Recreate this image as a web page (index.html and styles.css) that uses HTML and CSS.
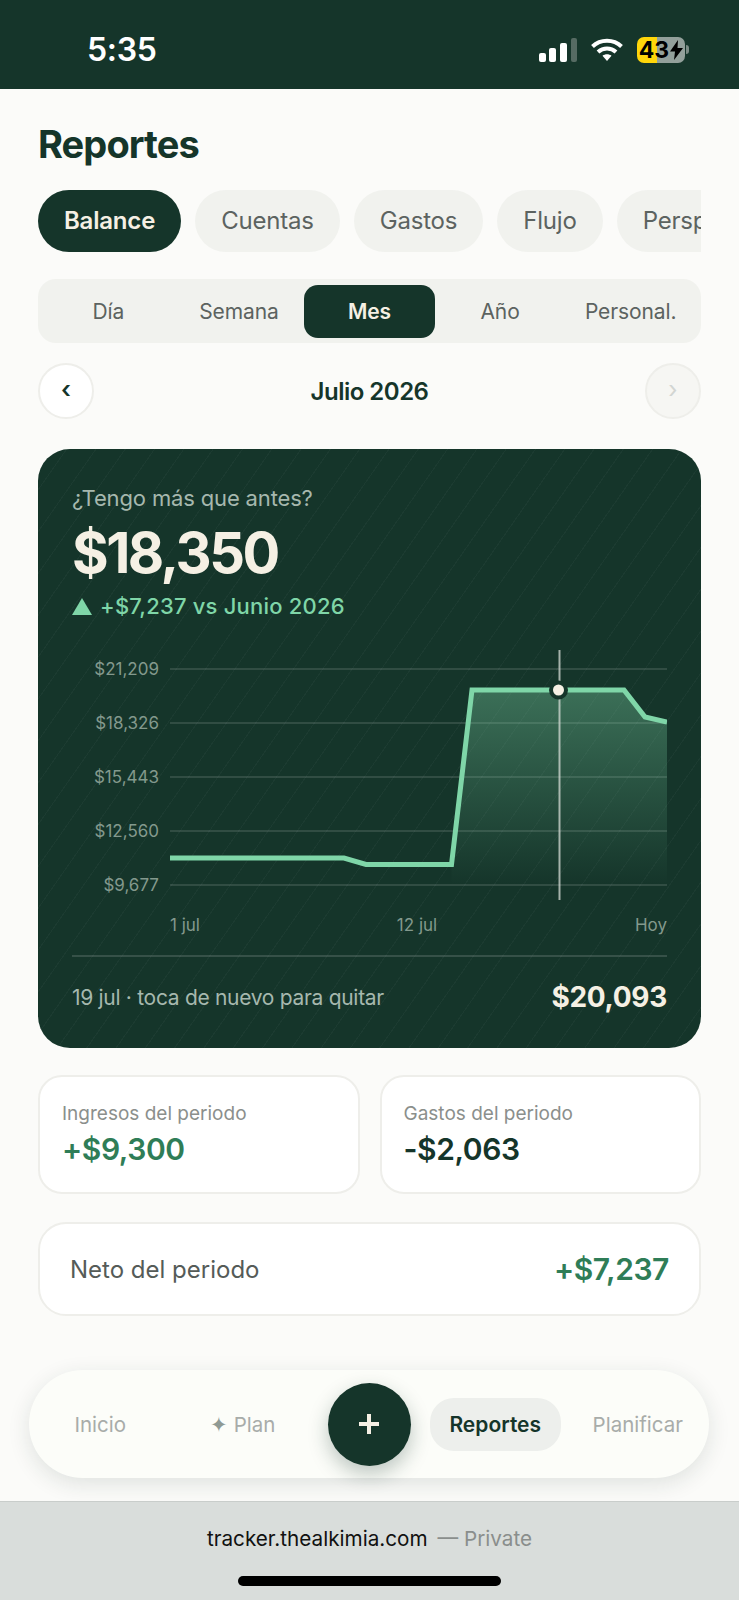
FILE: index.html
```html
<!DOCTYPE html>
<html lang="es">
<head>
    <meta charset="UTF-8">
    <meta name="viewport" content="width=device-width, initial-scale=1.0">
    <title>Reportes</title>
    <link rel="stylesheet" href="styles.css">
</head>
<body>
    <!-- Barra de estado -->
    <div class="status-bar">
        <span class="clock">5:35</span>
        <div class="status-icons">
            <svg class="signal" width="38" height="24" viewBox="0 0 38 24">
                <rect x="0" y="15" width="7" height="9" rx="2" fill="#fff"/>
                <rect x="10" y="10" width="7" height="14" rx="2" fill="#fff"/>
                <rect x="21" y="5" width="7" height="19" rx="2" fill="#fff"/>
                <rect x="32" y="0" width="6" height="24" rx="2" fill="#566b63"/>
            </svg>
            <svg class="wifi" width="32" height="24" viewBox="0 0 32 24" fill="none" stroke="#fff" stroke-width="4">
                <path d="M1.5 8.5C9.5 .8 22.5 .8 30.5 8.5"/>
                <path d="M7 14c5.200-4.800 12.800-4.800 18 0"/>
                <path d="M11.500 17.800 16 23l4.500-5.200c-2.600-2-6.400-2-9 0z" fill="#fff" stroke="none"/>
            </svg>
            <div class="battery">
                <span>43</span>
                <svg width="13" height="20" viewBox="0 0 13 20"><path d="M8 0 0 11.500h5L4 20l9-12H7.500z" fill="#000"/></svg>
            </div>
            <div class="battery-nub"></div>
        </div>
    </div>

    <div class="page">
        <h1 class="title">Reportes</h1>

        <div class="tabs">
            <div class="tab active">Balance</div>
            <div class="tab">Cuentas</div>
            <div class="tab">Gastos</div>
            <div class="tab">Flujo</div>
            <div class="tab">Perspectiva</div>
        </div>

        <div class="segment">
            <div class="seg-item">Día</div>
            <div class="seg-item">Semana</div>
            <div class="seg-item active">Mes</div>
            <div class="seg-item">Año</div>
            <div class="seg-item">Personal.</div>
        </div>

        <div class="month-nav">
            <div class="round-btn">‹</div>
            <div class="month">Julio 2026</div>
            <div class="round-btn off">›</div>
        </div>

        <!-- Tarjeta principal -->
        <div class="balance-card">
            <div class="card-label">¿Tengo más que antes?</div>
            <div class="card-amount">$18,350</div>
            <div class="card-trend"><span class="triangle"></span>+$7,237 vs Junio 2026</div>

            <svg class="chart" width="595" height="315" viewBox="0 0 595 315">
                <defs>
                    <linearGradient id="area" x1="0" y1="0" x2="0" y2="1">
                        <stop offset="0" stop-color="#7fd6a8" stop-opacity="0.36"/>
                        <stop offset="1" stop-color="#7fd6a8" stop-opacity="0"/>
                    </linearGradient>
                </defs>
                <g stroke="#fff" stroke-opacity="0.12" stroke-width="2">
                    <path d="M98 29H595"/>
                    <path d="M98 83H595"/>
                    <path d="M98 137H595"/>
                    <path d="M98 191H595"/>
                    <path d="M98 245H595"/>
                </g>
                <g class="y-label" text-anchor="end">
                    <text x="87" y="35">$21,209</text>
                    <text x="87" y="89">$18,326</text>
                    <text x="87" y="143">$15,443</text>
                    <text x="87" y="197">$12,560</text>
                    <text x="87" y="251">$9,677</text>
                </g>
                <path d="M379.500 224.500 400 50H552L573 77 595 82V245H379.500z" fill="url(#area)"/>
                <path d="M487.500 10V260" stroke="#d5dcd6" stroke-opacity="0.75" stroke-width="2"/>
                <path d="M98 218H272L294 224.500H379.500L400 50H552L573 77 595 82" fill="none" stroke="#7fd6a8" stroke-width="5"/>
                <circle cx="486.500" cy="50" r="7.500" fill="#f5f0e4" stroke="#15352a" stroke-width="4"/>
                <g class="x-label">
                    <text x="98" y="291">1 jul</text>
                    <text x="345" y="291" text-anchor="middle">12 jul</text>
                    <text x="595" y="291" text-anchor="end">Hoy</text>
                </g>
            </svg>

            <div class="card-foot">
                <span class="foot-note">19 jul · toca de nuevo para quitar</span>
                <span class="foot-value">$20,093</span>
            </div>
        </div>

        <div class="stat-row">
            <div class="stat">
                <div class="stat-label">Ingresos del periodo</div>
                <div class="stat-value green">+$9,300</div>
            </div>
            <div class="stat">
                <div class="stat-label">Gastos del periodo</div>
                <div class="stat-value">-$2,063</div>
            </div>
        </div>

        <div class="net">
            <span class="net-label">Neto del periodo</span>
            <span class="stat-value green">+$7,237</span>
        </div>
    </div>

    <!-- Navegación inferior -->
    <div class="bottom-nav">
        <div class="nav-item">Inicio</div>
        <div class="nav-item"><span class="spark">✦</span> Plan</div>
        <div class="fab">
            <svg width="22" height="22" viewBox="0 0 22 22"><path d="M11 1v20M1 11h20" stroke="#f5f0e4" stroke-width="4"/></svg>
        </div>
        <div class="nav-item"><span class="nav-pill">Reportes</span></div>
        <div class="nav-item">Planificar</div>
    </div>

    <!-- Barra del navegador -->
    <div class="browser-bar">
        <div class="url">tracker.thealkimia.com <span class="private">— Private</span></div>
        <div class="home-bar"></div>
    </div>
</body>
</html>
```
FILE: styles.css
```css
html, body {
    margin: 0;
    height: 1600px;
    overflow: hidden;
}

body {
    display: flex;
    flex-direction: column;
    background: #fbfbf9;
    font-family: 'Inter', 'Liberation Sans', sans-serif;
    color: #15352a;
}

/* Barra de estado */
.status-bar {
    height: 89px;
    flex-shrink: 0;
    background: #15352a;
    display: flex;
    justify-content: space-between;
    align-items: center;
    padding: 10px 50px 0 87px;
    box-sizing: border-box;
    color: #fff;
}

.clock {
    font-size: 32px;
    font-weight: 600;
    letter-spacing: -0.3px;
}

.status-icons {
    display: flex;
    align-items: center;
}

.signal {
    margin-right: 14px;
}

.wifi {
    margin-right: 14px;
}

.battery {
    width: 48px;
    height: 26px;
    border-radius: 7px;
    background: linear-gradient(90deg, #ffd60a 42%, #93a09b 42%);
    display: flex;
    align-items: center;
    justify-content: center;
    gap: 1px;
    color: #000;
    font-size: 23px;
    font-weight: 700;
}

.battery-nub {
    width: 3px;
    height: 9px;
    margin-left: 1px;
    background: #7c8c86;
    border-radius: 0 3px 3px 0;
}

/* Contenido */
.page {
    padding: 0 38px;
}

.title {
    margin: 29px 0 0;
    font-size: 38px;
    line-height: 52px;
    font-weight: 700;
    letter-spacing: -0.9px;
}

.tabs {
    display: flex;
    gap: 14px;
    margin-top: 20px;
    overflow: hidden;
}

.tab {
    height: 62px;
    padding: 0 26px;
    flex-shrink: 0;
    border-radius: 31px;
    background: #f1f2ee;
    color: #5c6360;
    font-size: 24px;
    letter-spacing: -0.2px;
    line-height: 62px;
}

.tab.active {
    background: #15352a;
    color: #f5f0e4;
    font-weight: 600;
}

.segment {
    display: grid;
    grid-template-columns: repeat(5, 1fr);
    margin-top: 27px;
    padding: 6px 5px 5px;
    border-radius: 18px;
    background: #f1f2ee;
}

.seg-item {
    height: 53px;
    border-radius: 14px;
    text-align: center;
    line-height: 53px;
    font-size: 21px;
    letter-spacing: -0.1px;
    color: #5c6360;
}

.seg-item.active {
    background: #15352a;
    color: #f5f0e4;
    font-weight: 600;
}

.month-nav {
    display: flex;
    justify-content: space-between;
    align-items: center;
    margin-top: 20px;
}

.round-btn {
    width: 56px;
    height: 56px;
    box-sizing: border-box;
    border: 2px solid #eeeeea;
    border-radius: 50%;
    background: #fff;
    text-align: center;
    line-height: 50px;
    font-size: 24px;
    font-weight: 600;
}

.round-btn.off {
    background: #f6f6f3;
    color: #d2d5d2;
    font-weight: 400;
}

.month {
    font-size: 24px;
    font-weight: 600;
    letter-spacing: -0.5px;
}

/* Tarjeta principal */
.balance-card {
    margin-top: 30px;
    padding: 34px 34px 11px;
    border-radius: 32px;
    color: #f5f0e4;
    background-color: #15352a;
    background-image: repeating-linear-gradient(125deg, transparent 0 23px, rgba(255, 255, 255, 0.03) 23px 24px);
}

.card-label {
    font-size: 22px;
    letter-spacing: -0.15px;
    line-height: 30px;
    color: #a6b8ae;
}

.card-amount {
    margin-top: 4px;
    font-size: 56px;
    line-height: 72px;
    font-weight: 700;
    letter-spacing: -2.5px;
}

.card-trend {
    display: flex;
    align-items: center;
    gap: 8px;
    margin-top: 2px;
    height: 30px;
    font-size: 22px;
    font-weight: 500;
    letter-spacing: 0.2px;
    color: #7fd6a8;
}

.triangle {
    width: 0;
    height: 0;
    border-left: 10px solid transparent;
    border-right: 10px solid transparent;
    border-bottom: 17px solid #7fd6a8;
}

.chart {
    display: block;
    margin-top: 19px;
}

.y-label text,
.x-label text {
    font-size: 17px;
    fill: #83998d;
}

.card-foot {
    display: flex;
    justify-content: space-between;
    align-items: center;
    height: 80px;
    border-top: 2px solid rgba(255, 255, 255, 0.14);
}

.foot-note {
    font-size: 21px;
    letter-spacing: -0.3px;
    color: #a6b8ae;
}

.foot-value {
    font-size: 28px;
    font-weight: 700;
    letter-spacing: -0.3px;
}

/* Tarjetas de resumen */
.stat-row {
    display: grid;
    grid-template-columns: 1fr 1fr;
    gap: 20px;
    margin-top: 27px;
}

.stat {
    height: 119px;
    box-sizing: border-box;
    padding: 23px 22px 0;
    border: 2px solid #eeeeea;
    border-radius: 24px;
    background: #fff;
}

.stat-label {
    margin-bottom: 1px;
    font-size: 19px;
    line-height: 28px;
    color: #8b8f8c;
}

.stat-value {
    font-size: 30px;
    line-height: 40px;
    font-weight: 600;
    letter-spacing: -0.4px;
}

.stat-value.green {
    color: #2f7d57;
}

.net {
    display: flex;
    justify-content: space-between;
    align-items: center;
    height: 94px;
    box-sizing: border-box;
    margin-top: 28px;
    padding: 0 30px;
    border: 2px solid #eeeeea;
    border-radius: 28px;
    background: #fff;
}

.net-label {
    font-size: 24px;
    color: #555b58;
}

/* Navegación inferior */
.bottom-nav {
    display: grid;
    grid-template-columns: 1fr 1fr 110px 1fr 1fr;
    align-items: center;
    height: 108px;
    margin: 54px 30px 0 29px;
    border-radius: 54px;
    background: #fcfdf9;
    box-shadow: 0 6px 22px rgba(22, 53, 43, 0.12);
}

.nav-item {
    text-align: center;
    font-size: 20.5px;
    color: #a8aca9;
}

.spark {
    color: #8f9a94;
}

.nav-pill {
    display: inline-block;
    width: 131px;
    height: 53px;
    border-radius: 24px;
    background: #edefec;
    line-height: 53px;
    font-size: 21px;
    font-weight: 600;
    color: #15352a;
}

.fab {
    justify-self: center;
    width: 83px;
    height: 83px;
    border-radius: 50%;
    background: #15352a;
    display: flex;
    align-items: center;
    justify-content: center;
    box-shadow: 0 8px 20px rgba(22, 53, 43, 0.28);
}

/* Barra del navegador */
.browser-bar {
    margin-top: auto;
    height: 99px;
    box-sizing: border-box;
    border-top: 1px solid #c9cdcb;
    background: #d9dddb;
    display: flex;
    flex-direction: column;
    align-items: center;
    padding-top: 22px;
}

.url {
    font-size: 20.7px;
    line-height: 30px;
    color: #111;
}

.private {
    margin-left: 4px;
    color: #8a8e8c;
}

.home-bar {
    width: 263px;
    height: 10px;
    margin-top: 22px;
    border-radius: 5px;
    background: #000;
}
```
